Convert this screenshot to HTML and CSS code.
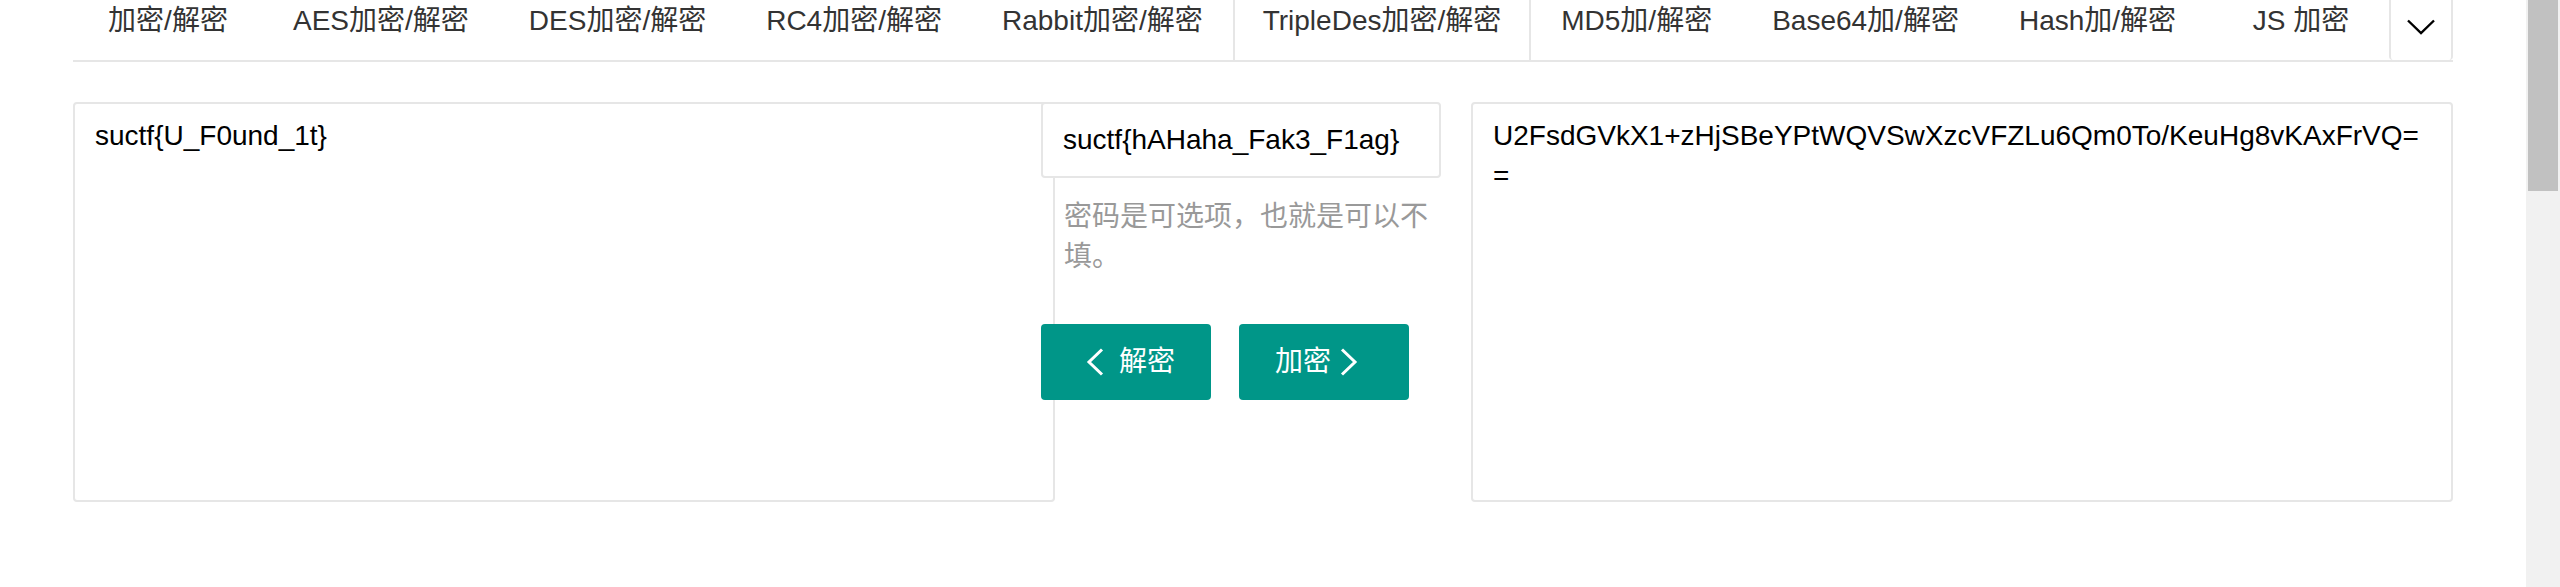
FILE: index.html
```html
<!DOCTYPE html>
<html lang="zh-CN">
<head>
<meta charset="utf-8">
<title>TripleDes加密/解密</title>
<link rel="stylesheet" href="styles.css">
</head>
<body>
<div class="page">
  <nav class="tabs">
    <a class="tab" href="#all">加密/解密</a>
    <a class="tab" href="#aes">AES加密/解密</a>
    <a class="tab" href="#des">DES加密/解密</a>
    <a class="tab" href="#rc4">RC4加密/解密</a>
    <a class="tab" href="#rabbit">Rabbit加密/解密</a>
    <a class="tab tab-active" href="#tripledes" aria-current="page">TripleDes加密/解密</a>
    <a class="tab" href="#md5">MD5加/解密</a>
    <a class="tab" href="#base64">Base64加/解密</a>
    <a class="tab" href="#hash">Hash加/解密</a>
    <a class="tab" href="#js">JS 加密</a>
    <button class="more" type="button" aria-label="更多">
      <svg width="32" height="32" viewBox="0 0 32 32" fill="none" stroke="#000" stroke-width="2.400"><path d="M3 9.500 16 22 29 9.500"/></svg>
    </button>
  </nav>
  <main class="tool">
    <textarea class="box" aria-label="明文" spellcheck="false">suctf{U_F0und_1t}</textarea>
    <div class="controls">
      <input class="password" id="password" type="text" value="suctf{hAHaha_Fak3_F1ag}" spellcheck="false">
      <label class="hint" for="password">密码是可选项，也就是可以不填。</label>
      <div class="actions">
        <button class="btn" type="button">
          <svg class="arrow" viewBox="0 0 36 36"><path d="M25 5.500 12 18 25 30.500"/></svg>
          <span class="after-icon">解密</span>
        </button>
        <button class="btn" type="button">
          <span>加密</span>
          <svg class="arrow" viewBox="0 0 36 36"><path d="M11 5.500 24 18 11 30.500"/></svg>
        </button>
      </div>
    </div>
    <textarea class="box" aria-label="密文" spellcheck="false">U2FsdGVkX1+zHjSBeYPtWQVSwXzcVFZLu6Qm0To/KeuHg8vKAxFrVQ==</textarea>
  </main>
</div>
<div class="scrollbar" aria-hidden="true"><div class="thumb"></div></div>
</body>
</html>
```
FILE: styles.css
```css
* {
  box-sizing: border-box;
}

body {
  display: grid;
  grid-template-columns: minmax(0, 1fr) 34px;
  min-height: 100vh;
  margin: 0;
  background: #fff;
  color: #333;
  font: 28px/40px "Liberation Sans", "Noto Sans CJK SC", sans-serif;
}

input,
textarea,
button {
  margin: 0;
  font: inherit;
}

.page {
  padding: 0 73px;
}

.tabs {
  position: relative;
  display: flex;
  height: 62px;
  overflow: hidden;
  border-bottom: 2px solid #e6e6e6;
}

.tab {
  flex: none;
  min-width: 190px;
  padding: 1px 30px 0;
  color: #333;
  text-align: center;
  text-decoration: none;
  white-space: nowrap;
}

.tab-active {
  padding: 1px 28px 0;
  border: solid #e6e6e6;
  border-width: 0 2px;
}

/* Stays at the right end, over the tabs that run past it. */
.more {
  position: absolute;
  top: 0;
  right: 0;
  bottom: 0;
  display: flex;
  justify-content: center;
  width: 64px;
  padding: 11px 0 0;
  border: solid #e6e6e6;
  border-width: 0 2px;
  border-radius: 0 0 4px 4px;
  background: #fff;
}

.tool {
  display: grid;
  grid-template-columns: minmax(0, 1fr) 416px minmax(0, 1fr);
  align-items: start;
  margin-top: 40px;
}

.box {
  display: block;
  width: 100%;
  height: 400px;
  padding: 12px 20px;
  border: 2px solid #e6e6e6;
  border-radius: 4px;
  background: #fff;
  color: #000;
  resize: none;
  word-break: break-all;
}

/* The password column overlaps the edge of the left box. */
.controls {
  z-index: 1;
  margin: 0 30px 0 -14px;
}

.password {
  display: block;
  width: 100%;
  height: 76px;
  padding: 0 20px;
  border: 2px solid #e6e6e6;
  border-radius: 4px;
  background: #fff;
  color: #000;
}

.hint {
  display: block;
  padding: 19px 0 0 23px;
  color: #999;
}

.actions {
  display: flex;
  gap: 28px;
  margin-top: 47px;
}

.btn {
  display: flex;
  align-items: center;
  width: 170px;
  height: 76px;
  padding: 0 0 0 36px;
  border: 0;
  border-radius: 4px;
  background: #009688;
  color: #fff;
  white-space: nowrap;
}

.arrow {
  flex: none;
  width: 36px;
  height: 36px;
  fill: none;
  stroke: #fff;
  stroke-width: 3;
}

.after-icon {
  margin-left: 6px;
}

.scrollbar {
  padding: 0 2px;
  background: #f1f1f1;
}

.thumb {
  height: 191px;
  background: #c1c1c1;
}
```
